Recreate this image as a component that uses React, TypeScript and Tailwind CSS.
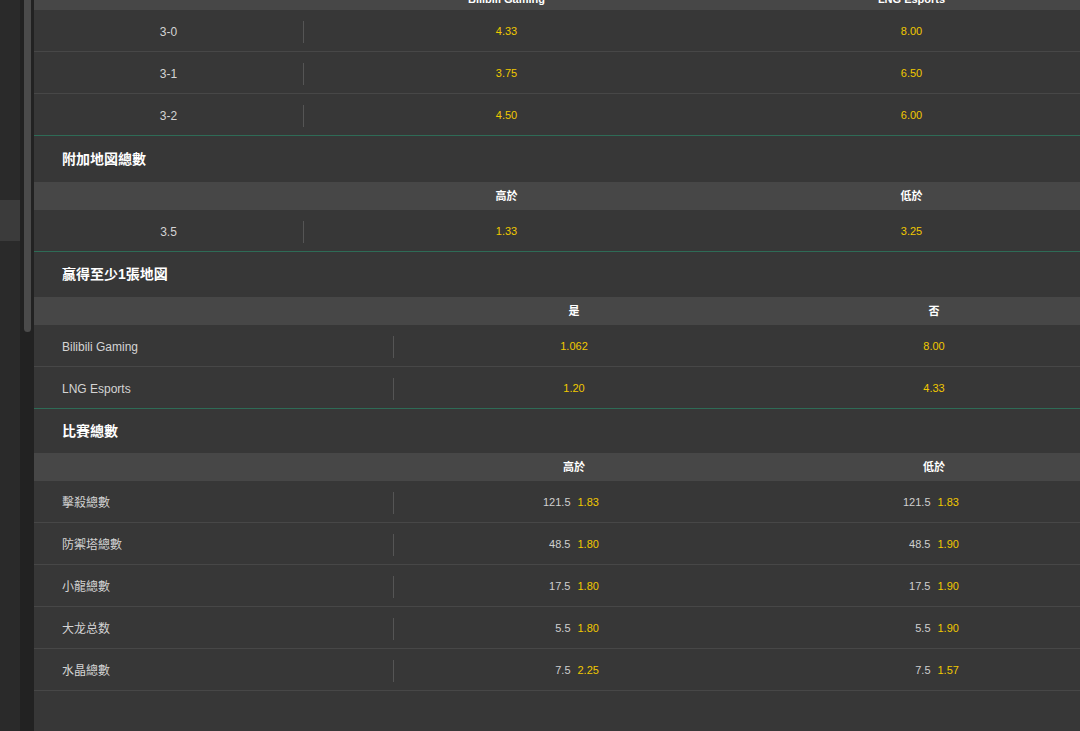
import React from "react";

const YELLOW = "text-[#f0c800]";

function Divider() {
  return <div className="h-[22px] w-px shrink-0 bg-[#555555]" />;
}

function Title({ text, h }: { text: string; h: string }) {
  return (
    <div className={`flex items-center pl-[28px] text-[14px] font-bold text-white ${h}`}>
      {text}
    </div>
  );
}

function ScoreSection() {
  const rows = [
    ["3-0", "4.33", "8.00"],
    ["3-1", "3.75", "6.50"],
    ["3-2", "4.50", "6.00"],
  ];
  return (
    <div>
      <div className="flex h-[28px] items-center bg-[#474747] pt-[7px] text-[11px] font-bold text-white">
        <div className="w-[270px] shrink-0" />
        <div className="w-[405px] shrink-0 text-center">Bilibili Gaming</div>
        <div className="w-[405px] shrink-0 text-center">LNG Esports</div>
      </div>
      {rows.map((r, i) => (
        <div
          key={r[0]}
          className={`flex h-[42px] items-center border-b pt-[2px] ${
            i === rows.length - 1 ? "border-[#2e6b56]" : "border-[#474747]"
          }`}
        >
          <div className="w-[269px] shrink-0 text-center text-[12px] text-[#d4d4d4]">{r[0]}</div>
          <Divider />
          <div className={`w-[405px] shrink-0 text-center text-[11px] ${YELLOW}`}>{r[1]}</div>
          <div className={`w-[405px] shrink-0 text-center text-[11px] ${YELLOW}`}>{r[2]}</div>
        </div>
      ))}
    </div>
  );
}

function ExtraMaps() {
  return (
    <div>
      <Title text="附加地図總數" h="h-[46px]" />
      <div className="flex h-[28px] items-center bg-[#474747] text-[11px] font-bold text-white">
        <div className="w-[270px] shrink-0" />
        <div className="w-[405px] shrink-0 text-center">高於</div>
        <div className="w-[405px] shrink-0 text-center">低於</div>
      </div>
      <div className="flex h-[42px] items-center border-b border-[#2e6b56] pt-[2px]">
        <div className="w-[269px] shrink-0 text-center text-[12px] text-[#d4d4d4]">3.5</div>
        <Divider />
        <div className={`w-[405px] shrink-0 text-center text-[11px] ${YELLOW}`}>1.33</div>
        <div className={`w-[405px] shrink-0 text-center text-[11px] ${YELLOW}`}>3.25</div>
      </div>
    </div>
  );
}

function WinOneMap() {
  const rows = [
    ["Bilibili Gaming", "1.062", "8.00"],
    ["LNG Esports", "1.20", "4.33"],
  ];
  return (
    <div>
      <Title text="贏得至少1張地図" h="h-[45px]" />
      <div className="flex h-[28px] items-center bg-[#474747] text-[11px] font-bold text-white">
        <div className="w-[360px] shrink-0" />
        <div className="w-[360px] shrink-0 text-center">是</div>
        <div className="w-[360px] shrink-0 text-center">否</div>
      </div>
      {rows.map((r, i) => (
        <div
          key={r[0]}
          className={`flex h-[42px] items-center border-b pt-[2px] ${
            i === rows.length - 1 ? "border-[#2e6b56]" : "border-[#474747]"
          }`}
        >
          <div className="w-[359px] shrink-0 pl-[28px] text-[12px] text-[#d4d4d4]">{r[0]}</div>
          <Divider />
          <div className={`w-[360px] shrink-0 text-center text-[11px] ${YELLOW}`}>{r[1]}</div>
          <div className={`w-[360px] shrink-0 text-center text-[11px] ${YELLOW}`}>{r[2]}</div>
        </div>
      ))}
    </div>
  );
}

function Cell({ line, odd }: { line: string; odd: string }) {
  return (
    <div className="flex w-[360px] shrink-0 text-[11px]">
      <div className="flex-1 pr-[3px] text-right text-[#cfcfcf]">{line}</div>
      <div className={`flex-1 pl-[4px] ${YELLOW}`}>{odd}</div>
    </div>
  );
}

function MatchTotals() {
  const rows = [
    ["擊殺總數", "121.5", "1.83", "121.5", "1.83"],
    ["防禦塔總數", "48.5", "1.80", "48.5", "1.90"],
    ["小龍總數", "17.5", "1.80", "17.5", "1.90"],
    ["大龙总数", "5.5", "1.80", "5.5", "1.90"],
    ["水晶總數", "7.5", "2.25", "7.5", "1.57"],
  ];
  return (
    <div>
      <Title text="比賽總數" h="h-[44px]" />
      <div className="flex h-[28px] items-center bg-[#474747] text-[11px] font-bold text-white">
        <div className="w-[360px] shrink-0" />
        <div className="w-[360px] shrink-0 text-center">高於</div>
        <div className="w-[360px] shrink-0 text-center">低於</div>
      </div>
      {rows.map((r) => (
        <div key={r[0]} className="flex h-[42px] items-center border-b border-[#474747] pt-[2px]">
          <div className="w-[359px] shrink-0 pl-[28px] text-[12px] text-[#d4d4d4]">{r[0]}</div>
          <Divider />
          <Cell line={r[1]} odd={r[2]} />
          <Cell line={r[3]} odd={r[4]} />
        </div>
      ))}
    </div>
  );
}

export default function App() {
  return (
    <div className="flex h-[731px] w-[1080px] overflow-hidden bg-[#373737] font-['Liberation_Sans','Noto_Sans_CJK_TC',sans-serif]">
      <aside className="flex w-[20px] shrink-0 flex-col bg-[#2a2a2a] pt-[200px]">
        <div className="h-[41px] bg-[#3b3b3b]" />
      </aside>
      <div className="w-[14px] shrink-0 bg-[#222222] pl-[4px]">
        <div className="h-[332px] w-[7px] rounded-b-full bg-[#4b4b4b]" />
      </div>
      <main className="-mt-[18px] w-[1080px] shrink-0">
        <ScoreSection />
        <ExtraMaps />
        <WinOneMap />
        <MatchTotals />
      </main>
    </div>
  );
}
